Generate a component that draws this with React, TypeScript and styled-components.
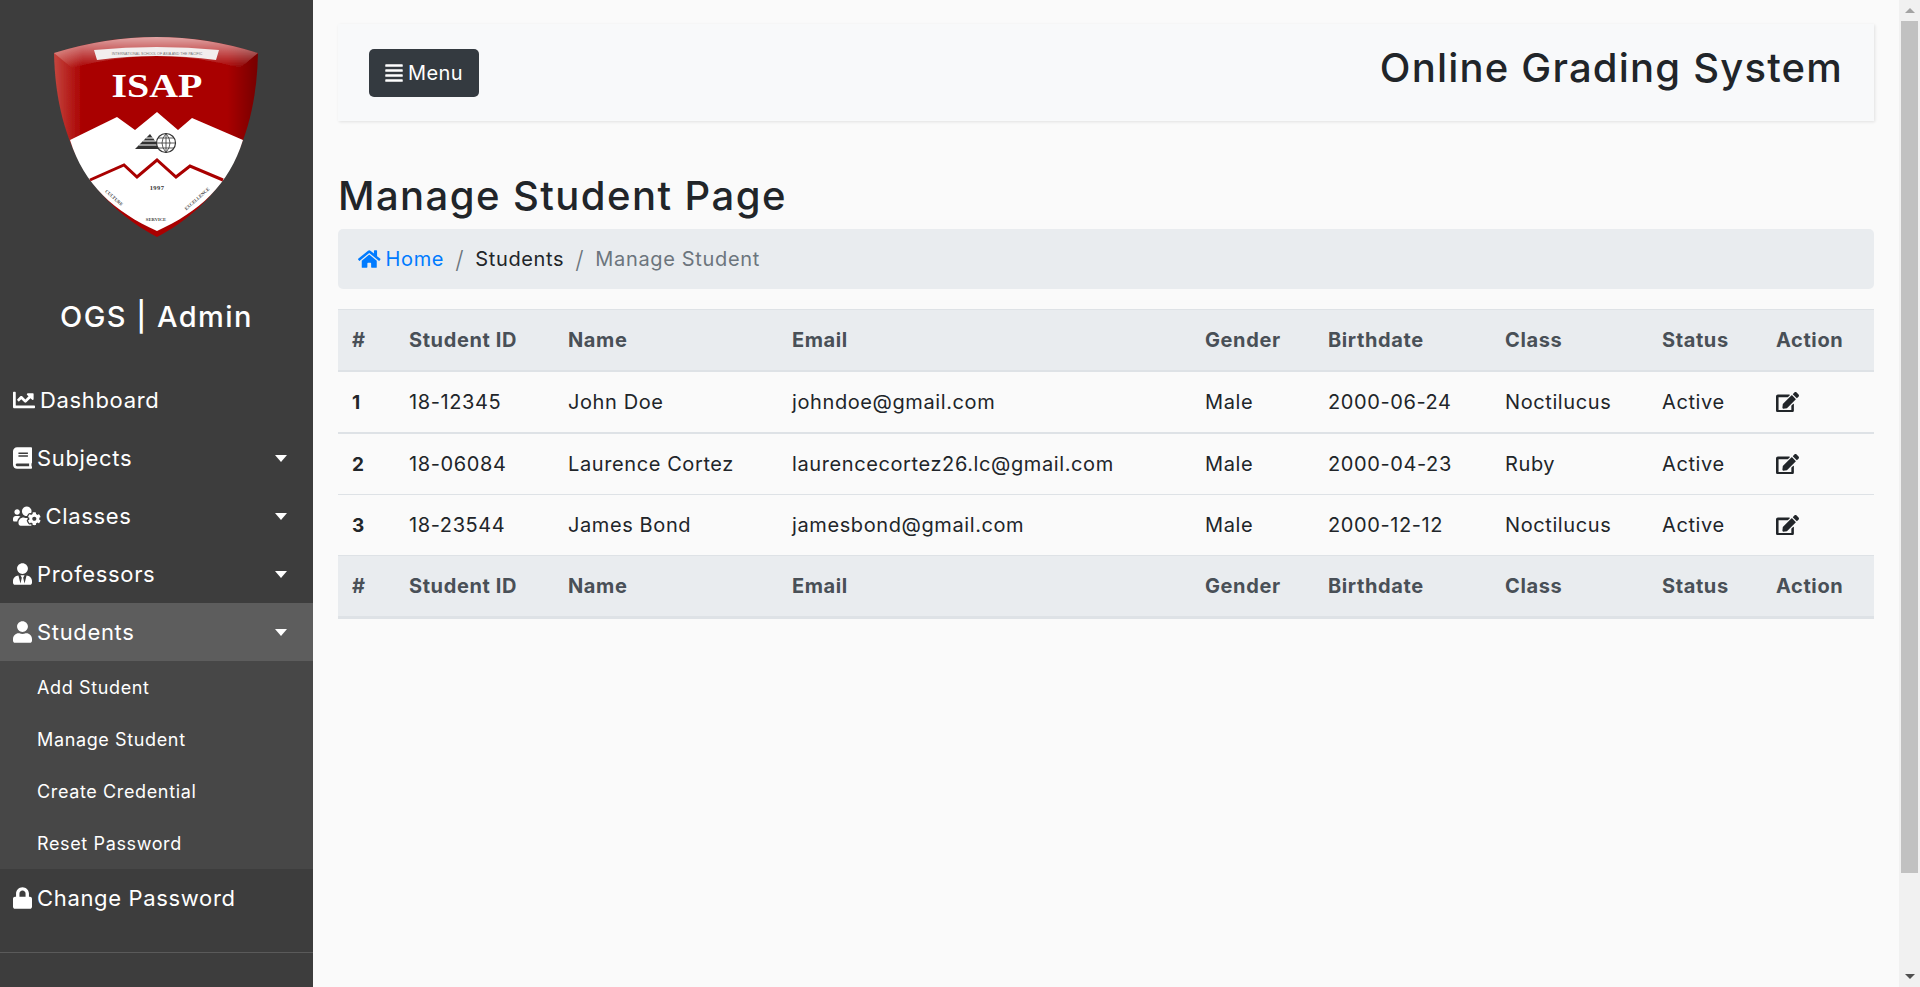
import React from "react";
import styled, { createGlobalStyle } from "styled-components";
import {
  FaAlignJustify,
  FaBook,
  FaChartLine,
  FaEdit,
  FaHome,
  FaLock,
  FaUser,
  FaUserTie,
  FaUsersCog,
} from "react-icons/fa";

const GlobalStyle = createGlobalStyle`
  * {
    box-sizing: border-box;
  }

  body {
    margin: 0;
    background: #fafafa;
    color: #212529;
    font-family: Inter, "Noto Sans", sans-serif;
    font-size: 20px;
    letter-spacing: 0.033em;
  }
`;

const Shell = styled.div`
  display: flex;
  height: 100vh;
  overflow: hidden;
`;

const Wrapper = styled.div`
  flex: 1;
  min-width: 0;
  display: flex;
`;

const ScrollRail = styled.div`
  width: 21px;
  flex-shrink: 0;
  display: flex;
  flex-direction: column;
  align-items: center;
  background: #f1f1f1;
`;

const ArrowBox = styled.div`
  width: 100%;
  height: 21px;
  flex-shrink: 0;
  display: flex;
  align-items: center;
  justify-content: center;
`;

const ArrowUp = styled.span`
  border-bottom: 5px solid #a3a3a3;
  border-left: 5px solid transparent;
  border-right: 5px solid transparent;
`;

const ArrowDown = styled.span`
  border-top: 5px solid #505050;
  border-left: 5px solid transparent;
  border-right: 5px solid transparent;
`;

const ScrollThumb = styled.div`
  width: 17px;
  height: 852px;
  flex-shrink: 0;
  background: #c1c1c1;
`;

const RailGap = styled.div`
  flex: 1;
`;

const Sidebar = styled.aside`
  width: 313px;
  flex-shrink: 0;
  background: #3d3d3d;
  color: #fff;
  padding-top: 30px;
`;

const Logo = styled.svg`
  display: block;
  width: 220px;
  height: 220px;
  margin: 0 auto;
`;

const Brand = styled.h3`
  margin: 46px 0 33px;
  font-size: 29px;
  font-weight: 500;
  line-height: 42px;
  letter-spacing: 0.05em;
  text-align: center;
`;

const NavList = styled.nav`
  display: flex;
  flex-direction: column;
  border-bottom: 1px solid #5a5a5a;
  padding-bottom: 25px;
`;

const NavItem = styled.a<{ $active?: boolean }>`
  display: flex;
  align-items: center;
  gap: 5px;
  height: 58px;
  padding: 0 26px 0 13px;
  background: ${(p) => (p.$active ? "#5d5d5d" : "transparent")};
  color: #fff;
  font-size: 22px;
  letter-spacing: 0.03em;
`;

const NavIcon = styled.span<{ $w: number }>`
  display: flex;

  svg {
    width: ${(p) => p.$w}px;
    height: 22px;
  }
`;

const Caret = styled.span`
  margin-left: auto;
  border-top: 7px solid #fff;
  border-left: 6.5px solid transparent;
  border-right: 6.5px solid transparent;
`;

const SubMenu = styled.div`
  display: flex;
  flex-direction: column;
  background: #474747;
`;

const SubItem = styled.a`
  display: flex;
  align-items: center;
  height: 52px;
  padding-left: 37px;
  color: #fff;
  font-size: 18px;
  letter-spacing: 0.035em;
`;

const Content = styled.main`
  flex: 1;
  min-width: 0;
  padding: 24px 25px;
`;

const TopBar = styled.header`
  display: flex;
  align-items: center;
  justify-content: space-between;
  height: 97px;
  padding: 0 31px;
  margin-bottom: 45px;
  background: #f8f9fa;
  box-shadow: 1px 1px 3px rgba(0, 0, 0, 0.1);
`;

const MenuButton = styled.button`
  display: flex;
  align-items: center;
  gap: 5px;
  width: 110px;
  height: 48px;
  padding: 0 16px;
  border: none;
  border-radius: 5px;
  background: #343a40;
  color: #fff;
  font: inherit;
  letter-spacing: 0.02em;

  svg {
    width: 18px;
    height: 20px;
  }
`;

const SystemTitle = styled.h2`
  margin: 0 0 9px;
  font-size: 40px;
  font-weight: 500;
  line-height: 60px;
  letter-spacing: 0.03em;
`;

const PageTitle = styled.h1`
  margin: 0 0 3px;
  font-size: 40px;
  font-weight: 500;
  line-height: 60px;
  letter-spacing: 0.036em;
`;

const Breadcrumb = styled.ol`
  display: flex;
  align-items: center;
  height: 60px;
  margin: 0 0 20px;
  padding: 0 20px;
  border-radius: 5px;
  background: #e9ecef;
  list-style: none;
`;

const Crumb = styled.li<{ $muted?: boolean }>`
  display: flex;
  align-items: center;
  color: ${(p) => (p.$muted ? "#6c757d" : "#212529")};

  &:not(:first-child)::before {
    content: "/";
    padding: 0 11px;
    color: #6c757d;
    font-size: 24px;
    font-weight: 300;
  }
`;

const HomeLink = styled.a`
  display: flex;
  align-items: center;
  gap: 5px;
  color: #007bff;

  svg {
    width: 22.5px;
    height: 20px;
  }
`;

const Table = styled.table`
  width: 100%;
  table-layout: fixed;
  border-collapse: separate;
  border-spacing: 0;
`;

const HeadCell = styled.th<{ $foot?: boolean }>`
  height: 63px;
  padding: 0 12px;
  background: #e9ecef;
  color: #495057;
  font-weight: 700;
  font-size: 20px;
  letter-spacing: 0.03em;
  text-align: left;
  border-top: ${(p) => (p.$foot ? "0" : "1px solid #dee2e6")};
  border-bottom: ${(p) => (p.$foot ? "3px" : "2px")} solid #dee2e6;

  &:first-child {
    padding-left: 14px;
  }
`;

const Row = styled.tr<{ $thick?: boolean }>`
  height: ${(p) => (p.$thick ? "62px" : "61px")};

  td,
  th {
    border-bottom: ${(p) => (p.$thick ? "2px" : "1px")} solid #dee2e6;
  }
`;

const Cell = styled.td`
  padding: 0 12px;
  font-size: 20px;
  letter-spacing: 0.03em;
`;

const RowNumber = styled.th`
  padding: 0 12px 0 14px;
  font-size: 19px;
  font-weight: 700;
  text-align: left;
`;

const EditIcon = styled(FaEdit)`
  display: block;
  width: 23px;
  height: 20.5px;
`;

const columns = [59, 159, 224, 413, 123, 177, 157, 114, 110];
const headers = ["#", "Student ID", "Name", "Email", "Gender", "Birthdate", "Class", "Status", "Action"];

const students = [
  { id: "18-12345", name: "John Doe", email: "johndoe@gmail.com", birth: "2000-06-24", cls: "Noctilucus" },
  { id: "18-06084", name: "Laurence Cortez", email: "laurencecortez26.lc@gmail.com", birth: "2000-04-23", cls: "Ruby" },
  { id: "18-23544", name: "James Bond", email: "jamesbond@gmail.com", birth: "2000-12-12", cls: "Noctilucus" },
];

const subItems = ["Add Student", "Manage Student", "Create Credential", "Reset Password"];

const ShieldLogo = () => (
  <Logo viewBox="47 30 220 220">
    <defs>
      <linearGradient id="side" x1="0" x2="1" y1="0" y2="0">
        <stop offset="0" stopColor="#c4453e" />
        <stop offset="0.14" stopColor="#a90000" />
        <stop offset="0.85" stopColor="#a90000" />
        <stop offset="1" stopColor="#760000" />
      </linearGradient>
      <linearGradient id="gloss" x1="0" x2="0" y1="0" y2="1">
        <stop offset="0" stopColor="#fff" stopOpacity="0.65" />
        <stop offset="1" stopColor="#fff" stopOpacity="0" />
      </linearGradient>
      <filter id="soft">
        <feGaussianBlur stdDeviation="0.35" />
      </filter>
    </defs>
    <g filter="url(#soft)">
      <path d="M54 53 Q157 21 258 53 C256 150 217 205 157 237 C97 205 56 150 54 53Z" fill="url(#side)" />
      <path d="M54 53 Q157 21 258 53 L240 68 Q157 44 72 68Z" fill="url(#gloss)" />
      <path
        d="M70 140 L117 117 L135 130 L157 112 L178 130 L192 118 L243 140 C229 185 199 212 157 231 C115 212 84 185 70 140Z"
        fill="#fff"
      />
      <path d="M90 180 L124 165 L137 177 L157 160 L176 177 L190 166 L223 180" fill="none" stroke="#a90000" strokeWidth="3" />
      <path d="M94 50 Q157 44 219 50 L216 60 Q157 52 97 60Z" fill="#f2eeee" />
      <polygon points="135,149 150,134 161,149" fill="#333" />
      <path d="M139 145 H158 M143 141 H155 M146 138 H153" stroke="#fff" strokeWidth="1" />
      <circle cx="166" cy="143" r="9.5" fill="#fff" stroke="#333" strokeWidth="1.2" />
      <path
        d="M157 143 H175.5 M158.5 138 H173.5 M158.5 148 H173.5 M166 133.5 V152.5 M166 133.5 Q158 143 166 152.5 M166 133.5 Q174 143 166 152.5"
        fill="none"
        stroke="#333"
        strokeWidth="0.8"
      />
    </g>
    <text x="157" y="54.5" fontFamily="Liberation Sans" fontSize="3.6" letterSpacing="0" textAnchor="middle" fill="#777">
      INTERNATIONAL SCHOOL OF ASIA AND THE PACIFIC
    </text>
    <text
      x="157"
      y="96.5"
      fontFamily="Liberation Serif"
      fontWeight="700"
      fontSize="33"
      letterSpacing="0"
      textAnchor="middle"
      textLength="91"
      lengthAdjust="spacingAndGlyphs"
      fill="#fff"
    >
      ISAP
    </text>
    <text x="157" y="190" fontFamily="Liberation Serif" fontWeight="700" fontSize="6.5" letterSpacing="0.4" textAnchor="middle" fill="#333">
      1997
    </text>
    <text x="156" y="221" fontFamily="Liberation Serif" fontWeight="700" fontSize="4.6" letterSpacing="0" textAnchor="middle" fill="#444">
      SERVICE
    </text>
    <text transform="translate(113 199) rotate(42)" fontFamily="Liberation Serif" fontWeight="700" fontSize="4.6" letterSpacing="0" textAnchor="middle" fill="#444">
      CULTURE
    </text>
    <text transform="translate(198 200) rotate(-42)" fontFamily="Liberation Serif" fontWeight="700" fontSize="4.6" letterSpacing="0" textAnchor="middle" fill="#444">
      EXCELLENCE
    </text>
  </Logo>
);

const App = () => {
  return (
    <Shell>
      <GlobalStyle />
      <Wrapper>
        <Sidebar>
          <ShieldLogo />
          <Brand>OGS | Admin</Brand>
          <NavList>
            <NavItem>
              <NavIcon $w={22}>
                <FaChartLine />
              </NavIcon>
              Dashboard
            </NavItem>
            <NavItem>
              <NavIcon $w={19}>
                <FaBook />
              </NavIcon>
              Subjects
              <Caret />
            </NavItem>
            <NavItem>
              <NavIcon $w={27.5}>
                <FaUsersCog />
              </NavIcon>
              Classes
              <Caret />
            </NavItem>
            <NavItem>
              <NavIcon $w={19}>
                <FaUserTie />
              </NavIcon>
              Professors
              <Caret />
            </NavItem>
            <NavItem $active>
              <NavIcon $w={19}>
                <FaUser />
              </NavIcon>
              Students
              <Caret />
            </NavItem>
            <SubMenu>
              {subItems.map((item) => (
                <SubItem key={item}>{item}</SubItem>
              ))}
            </SubMenu>
            <NavItem>
              <NavIcon $w={19}>
                <FaLock />
              </NavIcon>
              Change Password
            </NavItem>
          </NavList>
        </Sidebar>
        <Content>
          <TopBar>
            <MenuButton>
              <FaAlignJustify />
              Menu
            </MenuButton>
            <SystemTitle>Online Grading System</SystemTitle>
          </TopBar>
          <PageTitle>Manage Student Page</PageTitle>
          <Breadcrumb>
            <Crumb>
              <HomeLink>
                <FaHome />
                Home
              </HomeLink>
            </Crumb>
            <Crumb>Students</Crumb>
            <Crumb $muted>Manage Student</Crumb>
          </Breadcrumb>
          <Table>
            <colgroup>
              {columns.map((w, idx) => (
                <col key={idx} width={w} />
              ))}
            </colgroup>
            <thead>
              <tr>
                {headers.map((h) => (
                  <HeadCell key={h}>{h}</HeadCell>
                ))}
              </tr>
            </thead>
            <tbody>
              {students.map((s, idx) => (
                <Row key={s.id} $thick={idx === 0}>
                  <RowNumber>{idx + 1}</RowNumber>
                  <Cell>{s.id}</Cell>
                  <Cell>{s.name}</Cell>
                  <Cell>{s.email}</Cell>
                  <Cell>Male</Cell>
                  <Cell>{s.birth}</Cell>
                  <Cell>{s.cls}</Cell>
                  <Cell>Active</Cell>
                  <Cell>
                    <EditIcon />
                  </Cell>
                </Row>
              ))}
            </tbody>
            <tfoot>
              <tr>
                {headers.map((h) => (
                  <HeadCell key={h} $foot>
                    {h}
                  </HeadCell>
                ))}
              </tr>
            </tfoot>
          </Table>
        </Content>
      </Wrapper>
      <ScrollRail>
        <ArrowBox>
          <ArrowUp />
        </ArrowBox>
        <ScrollThumb />
        <RailGap />
        <ArrowBox>
          <ArrowDown />
        </ArrowBox>
      </ScrollRail>
    </Shell>
  );
};

export default App;
